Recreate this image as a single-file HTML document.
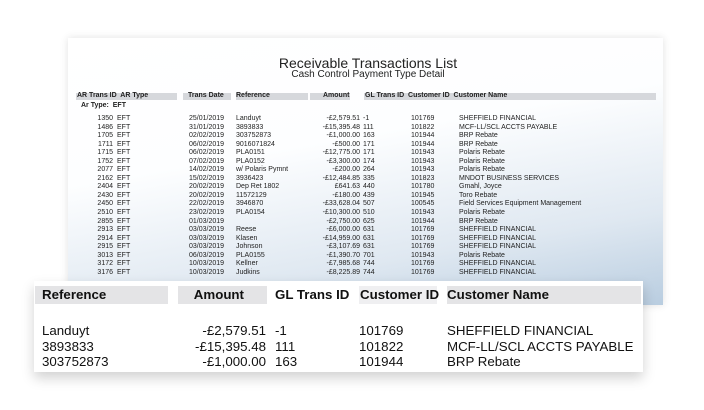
<!DOCTYPE html><html><head><style>
body{margin:0;width:704px;height:410px;background:#fff;position:relative;overflow:hidden;font-family:"Liberation Sans",Arial,sans-serif;}
.back{position:absolute;left:68px;top:38px;width:595px;height:267px;background:linear-gradient(170deg,#fff 0%,#fdfeff 40%,#dfe8f1 75%,#b9cde0 100%);box-shadow:0 0 8px rgba(0,0,0,.12);}
.t{position:absolute;white-space:nowrap;color:#222;}
.s{font-size:7px;line-height:8.55px;}
.bar{position:absolute;height:7px;background:#d6d8dc;}
.front{position:absolute;left:34px;top:281px;width:609px;height:91px;background:#fff;box-shadow:0 6px 12px rgba(0,0,0,.18);}
.f{font-size:13.3px;color:#111;position:absolute;white-space:nowrap;line-height:15.5px}
.fb{position:absolute;height:18px;top:5px;background:#e4e4e6;}
</style></head><body>
<div class="back">
<div class="t" style="left:0;width:600px;text-align:center;top:17px;font-size:14px;">Receivable Transactions List</div>
<div class="t" style="left:0;width:600px;text-align:center;top:31px;font-size:10px;">Cash Control Payment Type Detail</div>
<div class="bar" style="left:8px;top:55px;width:101px"></div>
<div class="bar" style="left:115px;top:55px;width:48px"></div>
<div class="bar" style="left:168px;top:55px;width:72px"></div>
<div class="bar" style="left:242px;top:55px;width:40px"></div>
<div class="bar" style="left:296px;top:55px;width:292px"></div>
<div class="t s" style="top:54px;left:9px;font-weight:bold">AR Trans ID&nbsp; AR Type</div>
<div class="t s" style="top:54px;left:120px;font-weight:bold">Trans Date</div>
<div class="t s" style="top:54px;left:168px;font-weight:bold">Reference</div>
<div class="t s" style="top:54px;left:255px;font-weight:bold">Amount</div>
<div class="t s" style="top:54px;left:297px;font-weight:bold">GL Trans ID&nbsp; Customer ID&nbsp; Customer Name</div>
<div class="t s" style="top:64px;left:13px;font-weight:bold">Ar Type:&nbsp; EFT</div>
<div class="t s" style="top:77px;left:20px;width:25px;text-align:right">1350<br>1486<br>1705<br>1711<br>1715<br>1752<br>2077<br>2162<br>2404<br>2430<br>2450<br>2510<br>2855<br>2913<br>2914<br>2915<br>3013<br>3172<br>3176</div>
<div class="t s" style="top:77px;left:49px">EFT<br>EFT<br>EFT<br>EFT<br>EFT<br>EFT<br>EFT<br>EFT<br>EFT<br>EFT<br>EFT<br>EFT<br>EFT<br>EFT<br>EFT<br>EFT<br>EFT<br>EFT<br>EFT</div>
<div class="t s" style="top:77px;left:121px">25/01/2019<br>31/01/2019<br>02/02/2019<br>06/02/2019<br>06/02/2019<br>07/02/2019<br>14/02/2019<br>15/02/2019<br>20/02/2019<br>20/02/2019<br>22/02/2019<br>23/02/2019<br>01/03/2019<br>03/03/2019<br>03/03/2019<br>03/03/2019<br>06/03/2019<br>10/03/2019<br>10/03/2019</div>
<div class="t s" style="top:77px;left:168px">Landuyt<br>3893833<br>303752873<br>9016071824<br>PLA0151<br>PLA0152<br>w/ Polaris Pymnt<br>3936423<br>Dep Ret 1802<br>11572129<br>3946870<br>PLA0154<br>&nbsp;<br>Reese<br>Klasen<br>Johnson<br>PLA0155<br>Kellner<br>Judkins</div>
<div class="t s" style="top:77px;left:220px;width:72px;text-align:right">-£2,579.51<br>-£15,395.48<br>-£1,000.00<br>-£500.00<br>-£12,775.00<br>-£3,300.00<br>-£200.00<br>-£12,484.85<br>£641.63<br>-£180.00<br>-£33,628.04<br>-£10,300.00<br>-£2,750.00<br>-£6,000.00<br>-£14,959.00<br>-£3,107.69<br>-£1,390.70<br>-£7,985.68<br>-£8,225.89</div>
<div class="t s" style="top:77px;left:295px">-1<br>111<br>163<br>171<br>171<br>174<br>264<br>335<br>440<br>439<br>507<br>510<br>625<br>631<br>631<br>631<br>701<br>744<br>744</div>
<div class="t s" style="top:77px;left:343px">101769<br>101822<br>101944<br>101944<br>101943<br>101943<br>101943<br>101823<br>101780<br>101945<br>100545<br>101943<br>101944<br>101769<br>101769<br>101769<br>101943<br>101769<br>101769</div>
<div class="t s" style="top:77px;left:391px">SHEFFIELD FINANCIAL<br>MCF-LL/SCL ACCTS PAYABLE<br>BRP Rebate<br>BRP Rebate<br>Polaris Rebate<br>Polaris Rebate<br>Polaris Rebate<br>MNDOT BUSINESS SERVICES<br>Gmahl, Joyce<br>Toro Rebate<br>Field Services Equipment Management<br>Polaris Rebate<br>BRP Rebate<br>SHEFFIELD FINANCIAL<br>SHEFFIELD FINANCIAL<br>SHEFFIELD FINANCIAL<br>Polaris Rebate<br>SHEFFIELD FINANCIAL<br>SHEFFIELD FINANCIAL</div>
</div>
<div class="front">
<div class="fb" style="left:1px;width:133px"></div>
<div class="fb" style="left:144px;width:89px"></div>
<div class="fb" style="left:325px;width:78px;background:#efeff1"></div>
<div class="fb" style="left:413px;width:194px"></div>
<div class="f" style="left:8px;top:6px;font-weight:bold">Reference</div>
<div class="f" style="left:110px;width:100px;text-align:right;top:6px;font-weight:bold">Amount</div>
<div class="f" style="left:241px;top:6px;font-weight:bold">GL Trans ID</div>
<div class="f" style="left:326px;top:6px;font-weight:bold">Customer ID</div>
<div class="f" style="left:413px;top:6px;font-weight:bold">Customer Name</div>
<div class="f" style="left:8px;top:42px">Landuyt<br>3893833<br>303752873</div>
<div class="f" style="left:130px;top:42px;width:102px;text-align:right">-£2,579.51<br>-£15,395.48<br>-£1,000.00</div>
<div class="f" style="left:241px;top:42px">-1<br>111<br>163</div>
<div class="f" style="left:325px;top:42px">101769<br>101822<br>101944</div>
<div class="f" style="left:413px;top:42px">SHEFFIELD FINANCIAL<br>MCF-LL/SCL ACCTS PAYABLE<br>BRP Rebate</div>
</div>
</body></html>
